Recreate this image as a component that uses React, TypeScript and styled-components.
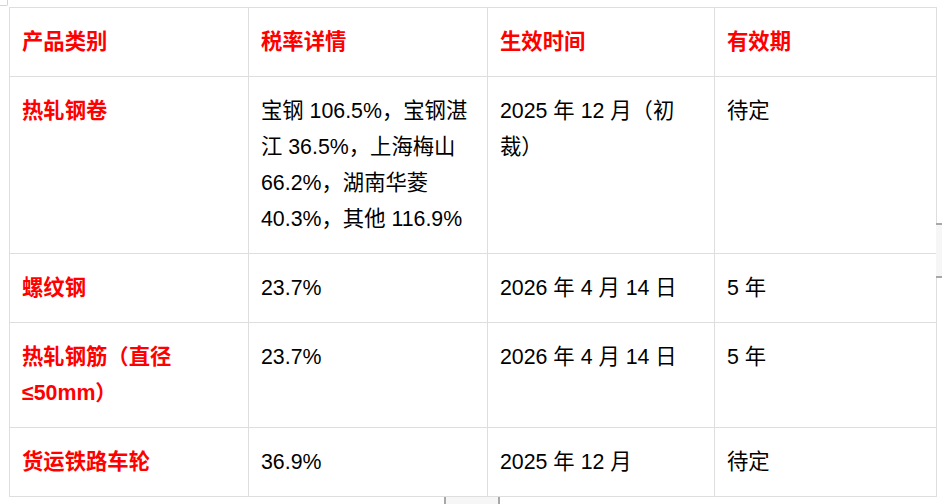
import styled, { createGlobalStyle } from 'styled-components';

const GlobalStyle = createGlobalStyle`
  html, body {
    margin: 0;
    padding: 0;
    background: #ffffff;
  }
  body {
    font-family: 'Liberation Sans', 'Noto Sans CJK SC', sans-serif;
    color: #000000;
  }
`;

const Page = styled.div`
  position: relative;
  width: 942px;
  height: 504px;
  overflow: hidden;
  padding: 7px 0 0 9px;
  box-sizing: border-box;
`;

const Table = styled.table`
  border-collapse: collapse;
  table-layout: fixed;
  width: 927px;
  font-size: 21.33px;
  line-height: 36px;
`;

const Cell = styled.td<{ $head?: boolean }>`
  border: 1px solid #dedede;
  padding: 16px 12px;
  vertical-align: top;
  color: ${(p) => (p.$head ? '#ff0000' : '#000000')};
  font-weight: ${(p) => (p.$head ? 700 : 400)};
`;

const CornerMark = styled.div`
  position: absolute;
  left: 0;
  top: 0;
  width: 7px;
  height: 5px;
  border-right: 1px solid #d4d4d4;
  border-bottom: 1px solid #d4d4d4;
  border-bottom-right-radius: 2px;
`;

const SideHandle = styled.div`
  position: absolute;
  left: 936px;
  top: 223px;
  width: 8px;
  height: 55px;
  background: #f6f6f6;
  border-top: 2px solid #a8a8a8;
  border-bottom: 2px solid #a8a8a8;
  box-sizing: border-box;
`;

const BottomHandle = styled.div`
  position: absolute;
  left: 444px;
  top: 497px;
  width: 56px;
  height: 10px;
  background: #f6f6f6;
  border-left: 2px solid #a8a8a8;
  border-right: 2px solid #a8a8a8;
  box-sizing: border-box;
`;

const widths = [239, 239, 227, 222];

const head = ['产品类别', '税率详情', '生效时间', '有效期'];

const rows = [
  ['热轧钢卷', '宝钢 106.5%，宝钢湛江 36.5%，上海梅山 66.2%，湖南华菱 40.3%，其他 116.9%', '2025 年 12 月（初裁）', '待定'],
  ['螺纹钢', '23.7%', '2026 年 4 月 14 日', '5 年'],
  ['热轧钢筋（直径≤50mm）', '23.7%', '2026 年 4 月 14 日', '5 年'],
  ['货运铁路车轮', '36.9%', '2025 年 12 月', '待定'],
];

export default function App() {
  return (
    <Page>
      <GlobalStyle />
      <CornerMark />
      <Table>
        <colgroup>
          {widths.map((w, i) => (
            <col key={i} style={{ width: w }} />
          ))}
        </colgroup>
        <tbody>
          <tr>
            {head.map((h) => (
              <Cell key={h} $head>
                {h}
              </Cell>
            ))}
          </tr>
          {rows.map((r) => (
            <tr key={r[0]}>
              {r.map((c, i) => (
                <Cell key={i} $head={i === 0}>
                  {c}
                </Cell>
              ))}
            </tr>
          ))}
        </tbody>
      </Table>
      <SideHandle />
      <BottomHandle />
    </Page>
  );
}
